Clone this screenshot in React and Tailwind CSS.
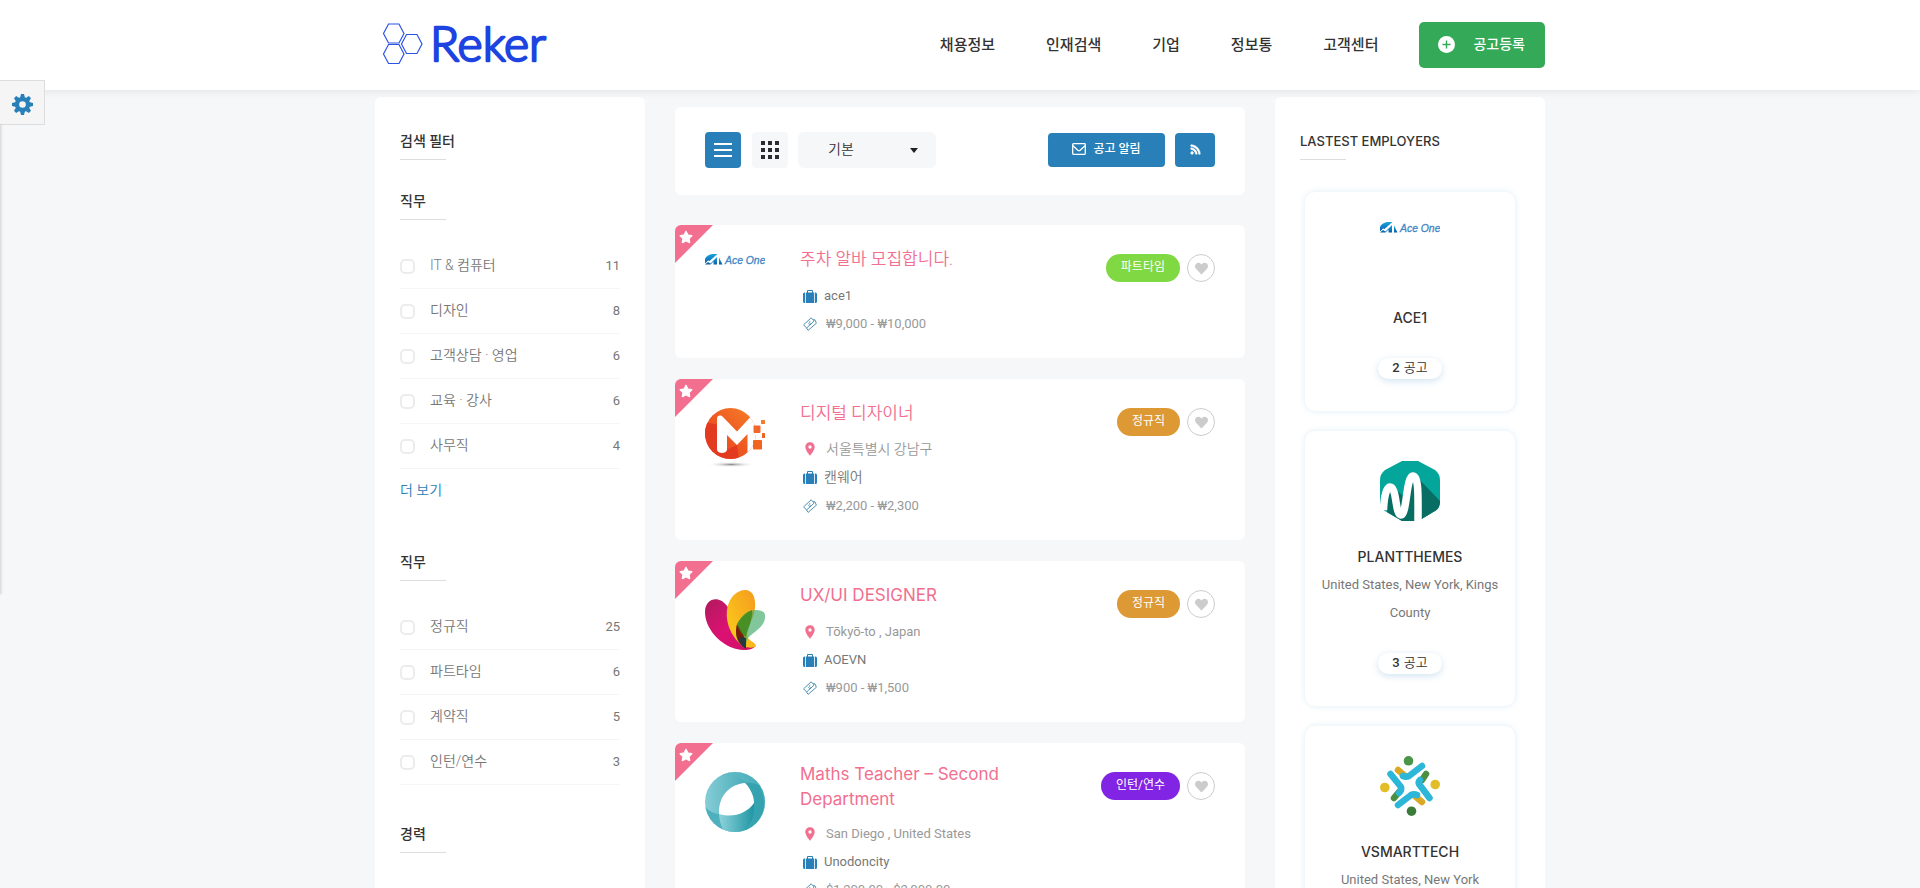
import React from "react";
import { FaHeart, FaRss, FaStar } from "react-icons/fa";
import { MdLocationOn } from "react-icons/md";

const KR = "font-['Roboto','Noto_Sans_CJK_KR',sans-serif]";
const DISPLAY = "font-['Inter','Noto_Sans_CJK_KR',sans-serif]";

/* ---------- logos ---------- */

function RekerLogo() {
  return (
    <svg className="h-[60px] w-[190px]" viewBox="0 -7 190 60" role="img" aria-label="Reker">
      <g fill="none" stroke="#2b54e6" strokeWidth="1.2">
        <path d="M8.5 1.5h10.500l5 9.500-5 9.500h-10.500l-5-9.500z" transform="translate(5 0.500)" />
        <path d="M8.500 1.500h10.500l5 9.500-5 9.500h-10.500l-5-9.500z" transform="translate(5 21)" />
        <path d="M8.500 1.500h10.500l5 9.500-5 9.500h-10.500l-5-9.500z" transform="translate(23 11)" />
      </g>
      <text
        x="55"
        y="39"
        fontFamily="Lato, sans-serif"
        fontSize="48"
        fontWeight="300"
        fill="#1d43e0"
        stroke="#1d43e0"
        strokeWidth="2.4"
        strokeLinejoin="round"
      >
        Reker
      </text>
    </svg>
  );
}

function AceLogo() {
  return (
    <svg className="h-3 w-[60px]" viewBox="0 0 60 12" role="img" aria-label="Ace One">
      <defs>
        <linearGradient id="ace" x1="0" y1="0" x2="0" y2="1">
          <stop offset="0" stopColor="#19a5df" />
          <stop offset="1" stopColor="#075fa8" />
        </linearGradient>
      </defs>
      <path d="M0 5C1.500 1.500 5 0 9 0h3.500L4.500 7 3 6.500 0 9.500z" fill="url(#ace)" />
      <path d="M0 10.500L3 8l2.500 1.500L12 3v7.500H8.500V7.500L5.500 10.500z" fill="url(#ace)" />
      <path d="M14 3.500l3.500 7H14z" fill="url(#ace)" />
      <text x="20" y="10" fontFamily="Liberation Sans, sans-serif" fontStyle="italic" fontSize="10.400" fill="#3f86c6" stroke="#3f86c6" strokeWidth="0.300">
        Ace One
      </text>
    </svg>
  );
}

function OrangeLogo() {
  return (
    <svg className="size-[60px]" viewBox="0 0 60 60" aria-hidden="true">
      <defs>
        <linearGradient id="or1" x1="0" y1="1" x2="1" y2="0">
          <stop offset="0" stopColor="#e5401f" />
          <stop offset="0.500" stopColor="#ee5a22" />
          <stop offset="1" stopColor="#f98a2a" />
        </linearGradient>
        <radialGradient id="or2">
          <stop offset="0" stopColor="#8a8a8a" />
          <stop offset="1" stopColor="#fff" stopOpacity="0" />
        </radialGradient>
        <clipPath id="or3">
          <circle cx="25.500" cy="25.500" r="25.500" />
        </clipPath>
      </defs>
      <ellipse cx="26" cy="56.500" rx="24" ry="2.800" fill="url(#or2)" />
      <g clipPath="url(#or3)">
        <rect width="60" height="60" fill="url(#or1)" />
        <path d="M0 14l14 3v28l18-8 3 23H0z" fill="#e23b20" />
        <path d="M12 42V10c1-3 4-3 6-1l14 14.500L45 9.500l6-2v40l-8.500-2.500V26L32 37 22 27v15c-1 4-9 4-10 0z" fill="#fff" />
      </g>
      <rect x="48.500" y="17.500" width="7" height="7.500" rx="1" fill="#f3682a" />
      <rect x="56" y="12" width="4" height="4" rx="0.500" fill="#f47a2d" />
      <rect x="57" y="25" width="3" height="5" rx="0.500" fill="#ef6426" />
      <rect x="48" y="32" width="9" height="9.500" rx="1" fill="#f0641f" />
    </svg>
  );
}

function PetalLogo() {
  return (
    <svg className="size-[60px]" viewBox="0 0 60 60" aria-hidden="true">
      <defs>
        <linearGradient id="pe1" x1="0" y1="0" x2="1" y2="1">
          <stop offset="0" stopColor="#b01a5e" />
          <stop offset="0.500" stopColor="#dc1173" />
          <stop offset="1" stopColor="#d0106a" />
        </linearGradient>
        <linearGradient id="pe2" x1="1" y1="0" x2="0" y2="1">
          <stop offset="0" stopColor="#f59a1f" />
          <stop offset="1" stopColor="#fbd21a" />
        </linearGradient>
      </defs>
      <path d="M0 22C0 12 7 8 13 9.500 24 12 30 30 33 42c3 10 18 10 17 14-2 5-14 5-22 2C14 53 0 38 0 22z" fill="url(#pe1)" />
      <path d="M22 20C24 6 33 0 40 0c8 0 11 8 10 18-1 11-9 20-8 28 1 5 9 6 9 10 0 2-8 2-11 1C30 52 20 36 22 20z" fill="url(#pe2)" />
      <path d="M31 42c1-13 9-22 20-22 7 0 10 3 9 8-1 9-10 13-17 20-2 3-2 7-2 11C35 56 31 50 31 42z" fill="#3fa765" fillOpacity="0.650" />
      <path d="M32 34c-2 8-2 18 9 25 0-8-2-16-9-25z" fill="#7c1c08" />
      <path d="M32 34c4-7 10-12 15-14 1 10-5 20-6 27-4-2-7-7-9-13z" fill="#3e8a1e" fillOpacity="0.850" />
      <path d="M33 48c2 5 5 9 8 11V48c-2-1-5-1-8 0z" fill="#223a3e" />
    </svg>
  );
}

function RingLogo() {
  return (
    <svg className="size-[60px]" viewBox="0 0 60 60" aria-hidden="true">
      <defs>
        <linearGradient id="ri1" x1="0" x2="1">
          <stop offset="0" stopColor="#86cdd6" />
          <stop offset="1" stopColor="#2c9dab" />
        </linearGradient>
        <linearGradient id="ri2" x1="0" x2="1">
          <stop offset="0" stopColor="#8ed3db" />
          <stop offset="1" stopColor="#1f96a4" />
        </linearGradient>
        <clipPath id="ri3">
          <circle cx="30" cy="30" r="30" />
        </clipPath>
      </defs>
      <g clipPath="url(#ri3)">
        <rect width="60" height="60" fill="url(#ri1)" />
        <path d="M15 4C34-1 50 12 49 38c-1 8-3 13-8 19l19 3V0H20z" fill="#5bb9c4" fillOpacity="0.600" />
        <path d="M40 11q7-1 14 2c8 14 8 34-12 45 6-7 8-17 7-27 0-7-4-14-9-20z" fill="#2c9dab" fillOpacity="0.700" />
        <path d="M14 42c11 4 27 0 35-11 1 11-2 20-7 27-7 3-16 3-23 1-3-4-5-11-5-17z" fill="url(#ri2)" />
        <path d="M0 35c4 4 8 6.500 14 7 0 6 2 12 5 18L0 60z" fill="#4fb0bd" />
      </g>
      <path d="M14 42C13 24 25 12 40 11c6 6 9 14 9 20-8 11-21 15-35 11z" fill="#fff" />
    </svg>
  );
}

function PlantLogo() {
  return (
    <svg className="size-[60px]" viewBox="0 0 60 60" aria-hidden="true">
      <defs>
        <clipPath id="hex">
          <path d="M22 0h16l17 9q5 4 5 10v22q0 6-5 9L40 59v1H22L5 50q-5-4-5-9V19q0-6 5-10z" />
        </clipPath>
      </defs>
      <g clipPath="url(#hex)">
        <rect width="60" height="60" fill="#04a69b" />
        <path d="M37 16l23 24v20H7V42l5-18 12 12z" fill="#086d62" />
      </g>
      <path d="M3.500 49C4 37 6 26 10 26c7 0 5 28 11 28S26 15 33 15c6 0 5 22 5 45" fill="none" stroke="#fff" strokeWidth="7.500" />
    </svg>
  );
}

function PeopleLogo() {
  return (
    <svg className="size-[60px]" viewBox="0 0 60 60" aria-hidden="true">
      <g fill="none" strokeWidth="6.500" strokeLinecap="round" strokeLinejoin="round">
        <path d="M18 14l7 6" stroke="#d9a826" />
        <path d="M46 18l-4 6" stroke="#4a8f42" />
        <path d="M42 46l-7-6" stroke="#d9a826" />
        <path d="M14 42l5-6" stroke="#4a8f42" />
        <path d="M42 10L29 20q-3 1.500-6 0" stroke="#2cb6d8" />
        <path d="M10.500 18L21 31q1 3-2 6" stroke="#2cb6d8" />
        <path d="M18 49l13-10q3-1.500 6 0" stroke="#2cb6d8" />
        <path d="M49.500 42L39 28q-1-2 1-4" stroke="#2cb6d8" />
      </g>
      <circle cx="28.500" cy="4.800" r="4.800" fill="#4b9548" />
      <circle cx="55.200" cy="28.500" r="4.800" fill="#e3bd27" />
      <circle cx="4.800" cy="31.500" r="4.800" fill="#e3bd27" />
      <circle cx="31.500" cy="55.200" r="4.800" fill="#3a7d3b" />
    </svg>
  );
}

/* ---------- small icons ---------- */

function GearIcon() {
  return (
    <svg className="size-[21px]" viewBox="0 0 21 21" aria-hidden="true">
      <g fill="#2980b9">
        {[0, 45, 90, 135].map((angle) => (
          <path key={angle} d="M9 0h3l1 4v13l-1 4H9l-1-4V4z" transform={`rotate(${angle} 10.5 10.5)`} />
        ))}
        <circle cx="10.500" cy="10.500" r="7.600" />
      </g>
      <circle cx="10.500" cy="10.500" r="3.300" fill="#f5f5f5" />
    </svg>
  );
}

function PlusIcon() {
  return (
    <svg className="size-[17px]" viewBox="0 0 17 17" aria-hidden="true">
      <circle cx="8.500" cy="8.500" r="8.500" fill="#fff" />
      <path d="M8.500 4.500v8M4.500 8.500h8" stroke="#34aa58" strokeWidth="1.400" />
    </svg>
  );
}

function SuitcaseIcon() {
  return (
    <svg className="h-[13px] w-[14px]" viewBox="0 0 14 13" fill="#2980b9" aria-hidden="true">
      <path d="M2.200 2.500V13H1.500A1.500 1.500 0 0 1 0 11.500V4a1.500 1.500 0 0 1 1.500-1.500z" />
      <path d="M11.800 2.500V13h.7a1.500 1.500 0 0 0 1.500-1.500V4a1.500 1.500 0 0 0-1.500-1.500z" />
      <path d="M4 2.500V1q0-1 1-1h4q1 0 1 1v1.500h1V13H3V2.500zM5 2.500h4V1H5z" fillRule="evenodd" />
    </svg>
  );
}

function MoneyIcon() {
  return (
    <svg className="size-[14px]" viewBox="0 0 14 14" fill="none" stroke="#3c86aa" strokeWidth="0.900" aria-hidden="true">
      <path d="M.6 7.800L8.200.8l3 3.200L3.600 11z" />
      <path d="M3.600 11l1.500 2.400 8.300-7.200-1.500-3.400-1.600-.4" />
      <path d="M5 5.800l2 2M7.300 4.300c-1.800.2-1 1.500-.2 1.800 1 .4.800 1.600-.6 1.500" strokeWidth="0.700" />
    </svg>
  );
}

function MailIcon() {
  return (
    <svg className="h-3 w-[14px]" viewBox="0 0 14 12" fill="none" stroke="#fff" strokeWidth="1.300" aria-hidden="true">
      <rect x="0.700" y="0.700" width="12.600" height="10.600" rx="0.800" />
      <path d="M1 2.800l4.800 4.400q1.200 1 2.400 0L13 2.800" />
    </svg>
  );
}

/* ---------- left column ---------- */

const jobFields = [
  ["IT & 컴퓨터", 11],
  ["디자인", 8],
  ["고객상담 · 영업", 6],
  ["교육 · 강사", 6],
  ["사무직", 4],
];

const jobTypes = [
  ["정규직", 25],
  ["파트타임", 6],
  ["계약직", 5],
  ["인턴/연수", 3],
];

function PanelTitle({ children, className = "" }) {
  return (
    <h2 className={"text-[14px] font-medium leading-5 text-[#333] " + className}>
      {children}
      <span className="mt-2 block h-px w-[46px] bg-[#ddd]" />
    </h2>
  );
}

function FilterList({ items }) {
  return (
    <ul className="mt-6">
      {items.map(([name, count]) => (
        <li key={name} className="border-b border-[#f4f5f6]">
          <label className="flex h-11 items-center text-[14px] text-[#777]">
            <input type="checkbox" className="size-[15px] appearance-none rounded-[5px] border-2 border-[#ececec] bg-white checked:bg-[#2980b9]" />
            <span className="ml-[15px] flex-1 pb-0.5 font-[350]">{name}</span>
            <span className="text-[13px]">{count}</span>
          </label>
        </li>
      ))}
    </ul>
  );
}

function Filters() {
  return (
    <aside className="w-[270px] shrink-0 rounded-md bg-white px-[25px] pb-10 pt-[34px]">
      <PanelTitle>검색 필터</PanelTitle>
      <PanelTitle className="mt-[31px]">직무</PanelTitle>
      <FilterList items={jobFields} />
      <a href="#more" className="mt-[11px] block text-[14px] font-[350] leading-5 text-[#2980b9]">
        더 보기
      </a>
      <PanelTitle className="mt-[52px]">직무</PanelTitle>
      <FilterList items={jobTypes} />
      <PanelTitle className="mt-[39px]">경력</PanelTitle>
    </aside>
  );
}

/* ---------- job list ---------- */

const jobs = [
  { title: "주차 알바 모집합니다.", kr: true, company: "ace1", pay: "₩9,000 - ₩10,000", type: "파트타임", color: "bg-[#80d843]", Logo: AceLogo },
  { title: "디지털 디자이너", kr: true, place: "서울특별시 강남구", company: "캔웨어", pay: "₩2,200 - ₩2,300", type: "정규직", color: "bg-[#dd9933]", Logo: OrangeLogo },
  { title: "UX/UI DESIGNER", place: "Tōkyō-to , Japan", company: "AOEVN", pay: "₩900 - ₩1,500", type: "정규직", color: "bg-[#dd9933]", Logo: PetalLogo },
  { title: "Maths Teacher – Second Department", place: "San Diego , United States", company: "Unodoncity", pay: "$1,200.00 - $2,000.00", type: "인턴/연수", color: "bg-[#8224e3]", Logo: RingLogo },
];

function JobCard({ job }) {
  const { Logo } = job;
  const krSize = job.kr ? "pb-0.5 text-[14px] font-[350]" : "text-[13px]";
  return (
    <article className="relative flex items-start overflow-hidden rounded-md bg-white px-[30px] pb-5 pt-[19px]">
      <span className="absolute left-0 top-0 size-[38px] bg-[#f26f90] [clip-path:polygon(0_0,100%_0,0_100%)]">
        <FaStar className="ml-1 mt-[5px] size-[14px] text-white" />
      </span>
      <div className="mt-[10px] w-[60px] shrink-0">
        <Logo />
      </div>
      <div className="ml-[35px] w-[235px]">
        <h3 className={"mb-2 flex min-h-[30px] items-center text-[17px] leading-[25px] text-[#f26f90] " + (job.kr ? "font-[350]" : DISPLAY)}>
          <a href="#job">{job.title}</a>
        </h3>
        {job.place && (
          <p className={"flex h-7 items-center text-[#999] " + krSize}>
            <span className="flex w-[26px] pl-0.5">
              <MdLocationOn className="size-4 text-[#f26f90]" />
            </span>
            {job.place}
          </p>
        )}
        <p className={"flex h-7 items-center text-[#777] " + (job.place ? krSize : "text-[13px]")}>
          <span className="flex w-6 pl-[3px]">
            <SuitcaseIcon />
          </span>
          {job.company}
        </p>
        <p className="flex h-7 items-center text-[13px] text-[#999]">
          <span className="flex w-[26px] pl-[3px]">
            <MoneyIcon />
          </span>
          {job.pay}
        </p>
      </div>
      <div className="ml-auto mt-[10px] flex items-center gap-[7px]">
        <span className={"h-7 rounded-full px-[15px] text-[12px] leading-[26px] text-white " + job.color}>{job.type}</span>
        <button type="button" aria-label="찜하기" className="flex size-7 items-center justify-center rounded-full border border-[#ccc] text-[#ccc]">
          <FaHeart className="size-[13px]" />
        </button>
      </div>
    </article>
  );
}

function Toolbar() {
  return (
    <div className="mb-[9px] flex items-center rounded-md bg-white px-[30px] pb-[27px] pt-[25px]">
      <button type="button" aria-label="목록 보기" className="flex size-9 flex-col items-center justify-center gap-1 rounded bg-[#2980b9]">
        <span className="h-0.5 w-[18px] bg-white" />
        <span className="h-0.5 w-[18px] bg-white" />
        <span className="h-0.5 w-[18px] bg-white" />
      </button>
      <button type="button" aria-label="격자 보기" className="ml-[11px] flex size-9 items-center justify-center rounded bg-[#f6f7f9]">
        <svg className="size-[18px]" viewBox="0 0 18 18" fill="#2b2b33" aria-hidden="true">
          {[0, 7, 14].map((y) => [0, 7, 14].map((x) => <rect key={x + "-" + y} x={x} y={y} width="4" height="4" />))}
        </svg>
      </button>
      <div className="relative ml-[10px]">
        <select aria-label="정렬" className="h-9 w-[138px] appearance-none rounded-md bg-[#f6f7f9] pb-0.5 pl-[30px] text-[14px] font-[350] text-[#333]">
          <option>기본</option>
        </select>
        <span className="pointer-events-none absolute right-[18px] top-4 border-x-4 border-t-[5px] border-x-transparent border-t-[#222]" />
      </div>
      <button type="button" className="ml-auto flex h-[34px] w-[117px] items-center justify-center gap-[7px] rounded bg-[#2980b9] pb-0.5 text-[12px] font-medium text-white">
        <MailIcon />
        공고 알림
      </button>
      <button type="button" aria-label="RSS" className="ml-[10px] flex h-[34px] w-10 items-center justify-center rounded bg-[#2980b9] pb-0.5 text-white">
        <FaRss className="size-[11px] stroke-white [stroke-width:24]" />
      </button>
    </div>
  );
}

/* ---------- employers ---------- */

const employers = [
  { name: "ACE1", count: 2, Logo: AceLogo },
  { name: "PLANTTHEMES", place: "United States, New York, Kings County", count: 3, Logo: PlantLogo },
  { name: "VSMARTTECH", place: "United States, New York", count: 3, Logo: PeopleLogo },
];

function Employers() {
  return (
    <aside className="w-[270px] shrink-0 rounded-md bg-white px-[25px] pb-10 pt-[34px]">
      <h2 className={"text-[13px] font-medium leading-5 text-[#333] " + DISPLAY}>
        LASTEST EMPLOYERS
        <span className="mt-2 block h-px w-[46px] bg-[#ddd]" />
      </h2>
      <div className="mx-[5px] mt-8 flex flex-col gap-5">
        {employers.map(({ name, place, count, Logo }) => (
          <article key={name} className="flex flex-col items-center rounded-[10px] px-3 pb-8 pt-[30px] text-center shadow-[0_0_6px_rgba(41,128,185,0.15)]">
            <div className="h-[60px]">
              <Logo />
            </div>
            <h3 className={"mt-[22px] text-[14px] font-medium leading-7 text-[#333] " + DISPLAY}>{name}</h3>
            {place && <p className="text-[13px] leading-7 text-[#777]">{place}</p>}
            <a href="#employer" className="mt-[26px] flex h-[21px] items-center rounded-full px-[14px] pb-0.5 text-[13px] text-[#333] shadow-[0_2px_7px_rgba(41,128,185,0.22)]">
              <b className="mr-1 font-medium">{count}</b>
              <span className="font-[350]">공고</span>
            </a>
          </article>
        ))}
      </div>
    </aside>
  );
}

/* ---------- page ---------- */

export default function App() {
  return (
    <div className={"relative h-screen overflow-hidden bg-[#f6f7f9] " + KR}>
      <header className="relative z-10 bg-white shadow-[0_0_10px_rgba(0,0,0,0.1)]">
        <div className="mx-auto flex h-[90px] max-w-[1170px] items-center">
          <a href="#home" className="block">
            <RekerLogo />
          </a>
          <nav className="ml-auto flex gap-[51px] text-[15px] font-medium text-[#333]">
            <a href="#jobs">채용정보</a>
            <a href="#people">인재검색</a>
            <a href="#company">기업</a>
            <a href="#info">정보통</a>
            <a href="#help">고객센터</a>
          </nav>
          <button type="button" className="ml-[41px] flex h-[46px] items-center gap-[18px] rounded-[5px] bg-[#34aa58] pl-[19px] pr-5 pb-0.5 text-[14px] font-medium text-white">
            <PlusIcon />
            공고등록
          </button>
        </div>
      </header>

      <div className="absolute left-0 top-20 z-20">
        <button type="button" aria-label="설정" className="flex size-[45px] items-center justify-center border border-l-0 border-[#ddd] bg-[#f5f5f5] pt-1">
          <GearIcon />
        </button>
        <div className="h-[469px] w-px bg-[#ddd] shadow-[0_0_3px_rgba(0,0,0,0.25)]" />
      </div>

      <div className="mx-auto mt-[7px] flex max-w-[1170px] items-start gap-[30px]">
        <Filters />
        <main className="mt-[10px] flex min-w-0 flex-1 flex-col gap-[21px]">
          <Toolbar />
          {jobs.map((job) => (
            <JobCard key={job.title} job={job} />
          ))}
        </main>
        <Employers />
      </div>
    </div>
  );
}
